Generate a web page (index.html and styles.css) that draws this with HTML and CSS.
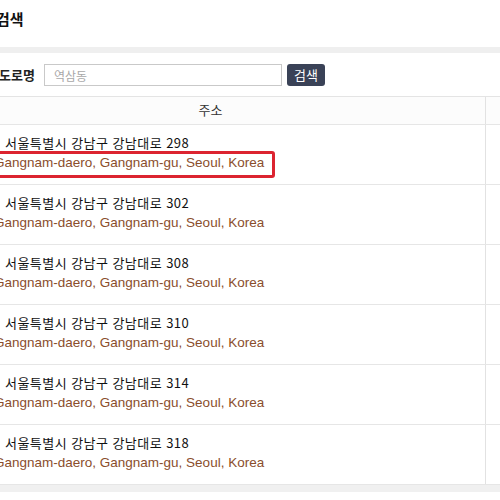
FILE: index.html
```html
<!DOCTYPE html>
<html lang="ko">
<head>
<meta charset="utf-8">
<link rel="stylesheet" href="styles.css">
</head>
<body>
<div class="title">검색</div>
<div class="band"></div>
<div class="search">
  <span class="label">도로명</span>
  <input class="field" type="text" placeholder="역삼동">
  <button class="btn">검색</button>
</div>
<div class="table">
  <div class="row head">
    <div class="cell main">주소</div>
    <div class="cell side"></div>
  </div>
  <div class="row">
    <div class="cell main addr">
      <div class="ko">서울특별시 강남구 강남대로 298</div>
      <div class="en">Gangnam-daero, Gangnam-gu, Seoul, Korea</div>
      <div class="mark"></div>
    </div>
    <div class="cell side"></div>
  </div>
  <div class="row">
    <div class="cell main addr">
      <div class="ko">서울특별시 강남구 강남대로 302</div>
      <div class="en">Gangnam-daero, Gangnam-gu, Seoul, Korea</div>
    </div>
    <div class="cell side"></div>
  </div>
  <div class="row">
    <div class="cell main addr">
      <div class="ko">서울특별시 강남구 강남대로 308</div>
      <div class="en">Gangnam-daero, Gangnam-gu, Seoul, Korea</div>
    </div>
    <div class="cell side"></div>
  </div>
  <div class="row">
    <div class="cell main addr">
      <div class="ko">서울특별시 강남구 강남대로 310</div>
      <div class="en">Gangnam-daero, Gangnam-gu, Seoul, Korea</div>
    </div>
    <div class="cell side"></div>
  </div>
  <div class="row">
    <div class="cell main addr">
      <div class="ko">서울특별시 강남구 강남대로 314</div>
      <div class="en">Gangnam-daero, Gangnam-gu, Seoul, Korea</div>
    </div>
    <div class="cell side"></div>
  </div>
  <div class="row">
    <div class="cell main addr">
      <div class="ko">서울특별시 강남구 강남대로 318</div>
      <div class="en">Gangnam-daero, Gangnam-gu, Seoul, Korea</div>
    </div>
    <div class="cell side"></div>
  </div>
</div>
<div class="band bottom"></div>
</body>
</html>
```
FILE: styles.css
```css
html, body {
  margin: 0;
  padding: 0;
  background: #fff;
  overflow: hidden;
}
body {
  font-family: "Noto Sans CJK KR", "Liberation Sans", sans-serif;
  color: #222;
  width: 500px;
}
.title {
  height: 47px;
  box-sizing: border-box;
  padding-top: 9px;
  margin-left: -4px;
  font-size: 15px;
  font-weight: bold;
  line-height: 20px;
  color: #111;
}
.band {
  height: 6px;
  background: #efefef;
}
.search {
  display: flex;
  align-items: center;
  padding: 11px 0 10px 0;
}
.label {
  width: 45px;
  margin-left: -1px;
  font-size: 13px;
  font-weight: bold;
  color: #222;
  line-height: 22px;
}
.field {
  width: 238px;
  height: 22px;
  box-sizing: border-box;
  border: 1px solid #c9c9c9;
  margin: 0;
  padding: 0 9px;
  font-family: "Noto Sans CJK KR", sans-serif;
  font-size: 12px;
  outline: none;
}
.field::placeholder {
  color: #a8a8a8;
}
.btn {
  margin: 0 0 0 5px;
  width: 38px;
  height: 22px;
  border: none;
  border-radius: 3px;
  background: #3a4257;
  color: #fff;
  font-family: "Noto Sans CJK KR", sans-serif;
  font-size: 13px;
  padding: 0;
  line-height: 22px;
}
.table {
  border-top: 1px solid #e4e4e4;
}
.row {
  display: grid;
  grid-template-columns: 486px 1fr;
  border-bottom: 1px solid #e6e6e6;
  height: 60px;
  box-sizing: border-box;
}
.row.head {
  height: 28px;
  background: #fcfcfc;
}
.cell.main {
  border-right: 1px solid #e2e2e2;
  position: relative;
}
.head .cell.main {
  text-align: center;
  padding-right: 64px;
  font-size: 13px;
  line-height: 25px;
  color: #333;
}
.addr {
  padding-top: 8px;
  box-sizing: border-box;
}
.ko {
  padding-left: 5px;
  font-size: 13px;
  line-height: 20px;
  color: #111;
  letter-spacing: 0.45px;
}
.en {
  margin-left: -6px;
  font-family: "Liberation Sans", sans-serif;
  font-size: 13.5px;
  line-height: 20px;
  color: #8a4e2c;
}
.mark {
  position: absolute;
  left: -10px;
  top: 26px;
  width: 285px;
  height: 27px;
  box-sizing: border-box;
  border: 3px solid #dc2430;
  border-radius: 3px;
}
.band.bottom {
  height: 7px;
  background: #f0f0f0;
}
```
